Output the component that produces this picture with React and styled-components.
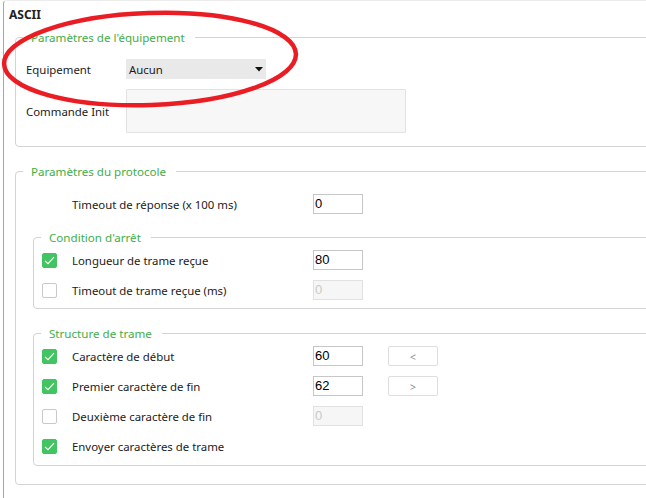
import React from "react";
import styled, { createGlobalStyle } from "styled-components";

const GlobalStyle = createGlobalStyle`
  html, body {
    margin: 0;
    padding: 0;
    background: #ffffff;
    overflow: hidden;
  }
  body {
    font-family: "Noto Sans", "Open Sans", sans-serif;
    font-size: 11.4px;
    color: #1b1b1b;
  }
`;

const Page = styled.div`
  position: relative;
  width: 646px;
  height: 498px;
  overflow: hidden;
`;

const Panel = styled.div`
  box-sizing: border-box;
  margin-left: 3px;
  width: 740px;
  height: 498px;
  border-left: 1px solid #a6a6a6;
  border-top: 1px solid #ececec;
  border-top-left-radius: 4px;
  padding-top: 5px;
`;

const Title = styled.div`
  margin-left: 5px;
  font-weight: 700;
  font-size: 12px;
  line-height: 16px;
  padding-top: 1px;
  color: #222;
`;

const Group = styled.fieldset`
  margin: ${(p) => p.$top}px 0 0 ${(p) => p.$left}px;
  padding: ${(p) => p.$pt}px 0 ${(p) => p.$pb}px 0;
  border: 1px solid #d3d3d3;
  border-radius: 4px;
  min-width: 0;
  display: flex;
  flex-direction: column;
  gap: 10px;
`;

const Legend = styled.legend`
  margin-left: 7px;
  padding: 1px 10px 0 8px;
  height: 16px;
  box-sizing: border-box;
  line-height: 16px;
  font-size: 11.6px;
  color: #3fae4a;
`;

const FormRow = styled.div`
  display: flex;
  align-items: center;
  height: ${(p) => p.$h || 20}px;
  padding-left: 10px;
`;

const FormLabel = styled.div`
  width: 100px;
  line-height: 16px;
  padding-top: 2px;
`;

const Select = styled.div`
  box-sizing: border-box;
  width: 140px;
  height: 20px;
  background: #e9e9e9;
  display: flex;
  align-items: center;
  justify-content: space-between;
  padding: 0 3px 0 3px;
`;

const SelectText = styled.span`
  line-height: 16px;
  padding-top: 2px;
`;

const TextArea = styled.div`
  box-sizing: border-box;
  width: 280px;
  height: 44px;
  background: #f7f7f7;
  border: 1px solid #e2e2e2;
  border-radius: 1px;
`;

const Row = styled.div`
  display: flex;
  align-items: center;
  height: 20px;
  padding-left: ${(p) => p.$indent}px;
`;

const CheckSlot = styled.div`
  width: 30px;
  display: flex;
  align-items: center;
`;

const Box = styled.div`
  box-sizing: border-box;
  width: 15px;
  height: 15px;
  border-radius: 2px;
  border: 1px solid ${(p) => (p.$on ? "#43c463" : "#c9c9c9")};
  background: ${(p) => (p.$on ? "#43c463" : "#ffffff")};
  display: flex;
  align-items: center;
  justify-content: center;
`;

const RowLabel = styled.div`
  width: 241px;
  line-height: 16px;
  padding-top: 2px;
`;

const Input = styled.div`
  box-sizing: border-box;
  width: 50px;
  height: 20px;
  border: 1px solid ${(p) => (p.$disabled ? "#e1e1e1" : "#c6c6c6")};
  background: ${(p) => (p.$disabled ? "#f6f6f6" : "#ffffff")};
  color: ${(p) => (p.$disabled ? "#c9c9c9" : "#000000")};
  font-family: "Liberation Sans", Arial, sans-serif;
  font-size: 13px;
  line-height: 15px;
  padding: 1px 0 0 1px;
`;

const SmallButton = styled.div`
  box-sizing: border-box;
  margin-left: 25px;
  width: 50px;
  height: 20px;
  border: 1px solid #dedede;
  border-radius: 2px;
  background: #ffffff;
  color: #8a8a8a;
  font-size: 10.5px;
  padding-top: 2px;
  display: flex;
  align-items: center;
  justify-content: center;
`;

const Annotation = styled.svg`
  position: absolute;
  left: 0;
  top: 0;
  pointer-events: none;
`;

const Check = () => (
  <svg width="11" height="9" viewBox="0 0 11 9">
    <path d="M1 4.8 L4 7.6 L10 1.2" fill="none" stroke="#ffffff" strokeWidth="1.1" />
  </svg>
);

const Arrow = () => (
  <svg width="8" height="5" viewBox="0 0 8 5">
    <path d="M0 0 H8 L4 4.5 Z" fill="#111" />
  </svg>
);

const Field = ({ check, label, value, disabled, button, indent }) => (
  <Row $indent={indent}>
    <CheckSlot>
      {check !== undefined && <Box $on={check}>{check && <Check />}</Box>}
    </CheckSlot>
    <RowLabel>{label}</RowLabel>
    {value !== undefined && <Input $disabled={disabled}>{value}</Input>}
    {button && <SmallButton>{button}</SmallButton>}
  </Row>
);

export default function App() {
  return (
    <Page>
      <GlobalStyle />
      <Panel>
        <Title>ASCII</Title>

        <Group $top={6} $left={11} $pt={14} $pb={13}>
          <Legend>Paramètres de l'équipement</Legend>
          <FormRow>
            <FormLabel>Equipement</FormLabel>
            <Select>
              <SelectText>Aucun</SelectText>
              <Arrow />
            </Select>
          </FormRow>
          <FormRow $h={44}>
            <FormLabel>Commande Init</FormLabel>
            <TextArea />
          </FormRow>
        </Group>

        <Group $top={16} $left={11} $pt={15} $pb={18}>
          <Legend>Paramètres du protocole</Legend>
          <Field indent={26} label="Timeout de réponse (x 100 ms)" value="0" />

          <Group $top={5} $left={17} $pt={5} $pb={8}>
            <Legend>Condition d'arrêt</Legend>
            <Field indent={8} check label="Longueur de trame reçue" value="80" />
            <Field indent={8} check={false} label="Timeout de trame reçue (ms)" value="0" disabled />
          </Group>

          <Group $top={6} $left={17} $pt={5} $pb={9}>
            <Legend>Structure de trame</Legend>
            <Field indent={8} check label="Caractère de début" value="60" button="<" />
            <Field indent={8} check label="Premier caractère de fin" value="62" button=">" />
            <Field indent={8} check={false} label="Deuxième caractère de fin" value="0" disabled />
            <Field indent={8} check label="Envoyer caractères de trame" />
          </Group>
        </Group>
      </Panel>

      <Annotation width="320" height="130" viewBox="0 0 320 130">
        <ellipse
          cx="150"
          cy="59"
          rx="146"
          ry="46"
          transform="rotate(-2 150 59)"
          fill="none"
          stroke="#ea1c24"
          strokeWidth="4.5"
        />
      </Annotation>
    </Page>
  );
}
